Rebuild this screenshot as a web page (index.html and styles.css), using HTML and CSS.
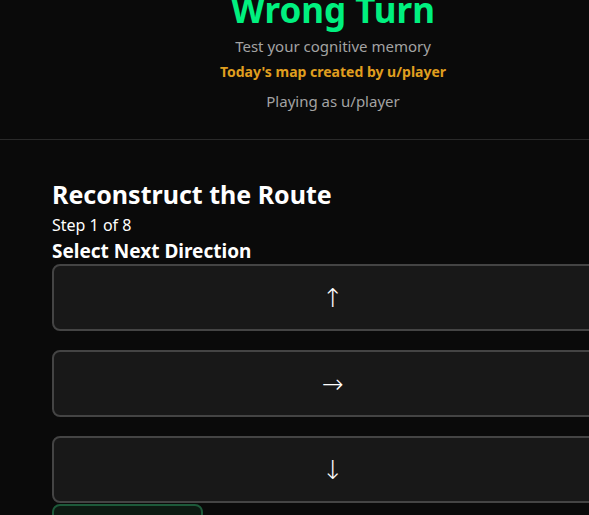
FILE: index.html
```html
<!DOCTYPE html>
<html lang="en">
<head>
    <meta charset="UTF-8">
    <meta name="viewport" content="width=device-width, initial-scale=1.0">
    <title>Wrong Turn</title>
    <link rel="stylesheet" href="styles.css">
</head>
<body>
    <div class="page">
        <!-- Header -->
        <header class="header">
            <h1 class="title">Wrong Turn</h1>
            <p class="tagline">Test your cognitive memory</p>
            <p class="credit">Today's map created by u/player</p>
            <p class="player">Playing as u/player</p>
        </header>

        <!-- Route builder -->
        <main class="route">
            <h2>Reconstruct the Route</h2>
            <p class="step">Step 1 of 8</p>
            <h3>Select Next Direction</h3>

            <div class="directions">
                <button class="dir-btn">&uarr;</button>
                <button class="dir-btn">&rarr;</button>
                <button class="dir-btn">&darr;</button>
            </div>
            <button class="submit-btn"></button>
        </main>
    </div>
</body>
</html>
```

FILE: styles.css
```css
html, body {
    margin: 0;
    background-color: #0a0a0a;
    color: #fff;
    font-family: "Noto Sans", "Open Sans", sans-serif;
}

.page {
    width: 666px;
}

.header {
    text-align: center;
    padding-bottom: 27px;
    border-bottom: 1px solid #2a2a2a;
}

.title {
    margin: -12px 0 0;
    font-size: 35px;
    line-height: 43px;
    font-weight: 700;
    color: #00f07f;
}

.tagline {
    margin: 4px 0 0;
    font-size: 15px;
    line-height: 22px;
    color: #a3a3a3;
}

.credit {
    margin: 5px 0 0;
    font-size: 14px;
    line-height: 20px;
    font-weight: 700;
    color: #e09f1f;
}

.player {
    margin: 8px 0 0;
    font-size: 15px;
    line-height: 22px;
    color: #a3a3a3;
}

.route {
    padding: 38px 52px 0;
}

.route h2 {
    margin: 0;
    font-size: 25px;
    line-height: 32px;
    font-weight: 700;
}

.step {
    margin: 0;
    padding-top: 3px;
    font-size: 16px;
    line-height: 24px;
}

.route h3 {
    margin: 0;
    padding-top: 1px;
    font-size: 19px;
    line-height: 26px;
    font-weight: 700;
}

.directions {
    display: flex;
    flex-direction: column;
    gap: 19px;
}

.dir-btn {
    width: 100%;
    height: 67px;
    background-color: #181818;
    border: 2px solid #444;
    border-radius: 8px;
    color: #fff;
    font-family: "DejaVu Sans", sans-serif;
    font-size: 26px;
    font-weight: 200;
    cursor: pointer;
}

    .dir-btn:hover {
        background-color: #222;
    }

.submit-btn {
    display: block;
    width: 151px;
    height: 48px;
    margin-top: 1px;
    background-color: #0d1a12;
    border: 2px solid #1d5a3a;
    border-radius: 8px;
}
```
